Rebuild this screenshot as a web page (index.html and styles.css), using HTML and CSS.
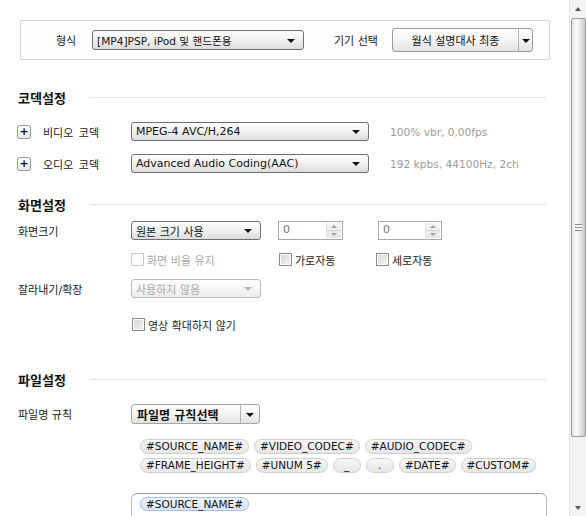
FILE: index.html
```html
<!DOCTYPE html>
<html lang="ko">
<head>
<meta charset="utf-8">
<link rel="stylesheet" href="styles.css">
</head>
<body>
<div class="page">
  <div class="content">
    <div class="formatbox">
      <span class="lbl-fmt">형식</span>
      <div class="select sel-fmt"><span class="val">[MP4]PSP, iPod 및 핸드폰용</span><i class="arrow"></i></div>
      <span class="lbl-dev">기기 선택</span>
      <div class="splitbtn dev"><span class="main">월식 설명대사 최종</span><span class="drop"><i class="arrow"></i></span></div>
    </div>

    <div class="sec-title t-codec"><span>코덱설정</span><i class="rule"></i></div>
    <div class="row codec-row r-video">
      <span class="plus">+</span>
      <span class="codec-lbl">비디오 코덱</span>
      <div class="select sel-codec"><span class="val">MPEG-4 AVC/H,264</span><i class="arrow"></i></div>
      <span class="info">100% vbr, 0,00fps</span>
    </div>
    <div class="row codec-row r-audio">
      <span class="plus">+</span>
      <span class="codec-lbl">오디오 코덱</span>
      <div class="select sel-codec"><span class="val">Advanced Audio Coding(AAC)</span><i class="arrow"></i></div>
      <span class="info">192 kpbs, 44100Hz, 2ch</span>
    </div>

    <div class="sec-title t-screen"><span>화면설정</span><i class="rule"></i></div>
    <div class="row r-size">
      <span class="lbl">화면크기</span>
      <div class="select sel-size"><span class="val">원본 크기 사용</span><i class="arrow"></i></div>
      <div class="spin sp1"><span class="num">0</span><span class="spbtn"><i class="up"></i><i class="dn"></i></span></div>
      <div class="spin sp2"><span class="num">0</span><span class="spbtn"><i class="up"></i><i class="dn"></i></span></div>
    </div>
    <div class="row r-checks">
      <label class="chk disabled c1"><i class="box"></i>화면 비율 유지</label>
      <label class="chk c2"><i class="box"></i>가로자동</label>
      <label class="chk c3"><i class="box"></i>세로자동</label>
    </div>
    <div class="row r-crop">
      <span class="lbl">잘라내기/확장</span>
      <div class="select sel-size disabled"><span class="val">사용하지 않음</span><i class="arrow"></i></div>
    </div>
    <div class="row r-zoom">
      <label class="chk c1"><i class="box"></i>영상 확대하지 않기</label>
    </div>

    <div class="sec-title t-file"><span>파일설정</span><i class="rule"></i></div>
    <div class="row r-rule">
      <span class="lbl">파일명 규칙</span>
      <div class="splitbtn rulebtn"><span class="main">파일명 규칙선택</span><span class="drop"><i class="arrow"></i></span></div>
    </div>
    <div class="tags">
      <div class="tagrow">
        <span class="tag">#SOURCE_NAME#</span>
        <span class="tag">#VIDEO_CODEC#</span>
        <span class="tag">#AUDIO_CODEC#</span>
      </div>
      <div class="tagrow">
        <span class="tag">#FRAME_HEIGHT#</span>
        <span class="tag">#UNUM 5#</span>
        <span class="tag sym">_</span>
        <span class="tag sym">.</span>
        <span class="tag">#DATE#</span>
        <span class="tag">#CUSTOM#</span>
      </div>
    </div>
    <div class="namebox">
      <span class="tag active">#SOURCE_NAME#</span>
    </div>
  </div>

  <div class="scrollbar">
    <div class="sb-btn"><i class="sb-up"></i></div>
    <div class="sb-track">
      <div class="sb-thumb"><i class="grip"></i></div>
    </div>
    <div class="sb-btn"><i class="sb-dn"></i></div>
  </div>
</div>
</body>
</html>
```

FILE: styles.css
```css
html, body {
  margin: 0;
  padding: 0;
  background: #ffffff;
}
body {
  font-family: "DejaVu Sans", "Noto Sans CJK KR", sans-serif;
  font-size: 11px;
  color: #222;
  width: 586px;
  height: 516px;
  overflow: hidden;
}
.page {
  display: flex;
  width: 586px;
  height: 516px;
}
.content {
  width: 569px;
  height: 516px;
  overflow: hidden;
  flex: none;
}

/* top format box */
.formatbox {
  margin: 20px 0 0 20px;
  width: 528px;
  height: 38px;
  border: 1px solid #d6d6d6;
  background: #fdfdfd;
  display: flex;
  align-items: center;
}
.lbl-fmt { margin-left: 35px; width: 36px; }
.lbl-dev { margin-left: 30px; width: 58px; }

.select {
  box-sizing: border-box;
  height: 19px;
  border: 1px solid #6f6f6f;
  border-radius: 3px;
  background: linear-gradient(#ffffff, #f3f3f3 45%, #dcdcdc);
  display: flex;
  align-items: center;
  padding: 0 8px 0 4px;
  color: #111;
}
.select .val { flex: 1; white-space: nowrap; overflow: hidden; }
.arrow {
  width: 0;
  height: 0;
  border-left: 4px solid transparent;
  border-right: 4px solid transparent;
  border-top: 4px solid #111;
  margin-top: 1px;
}
.sel-fmt { width: 212px; height: 20px; }
.sel-fmt .val { font-size: 10.6px; }

.splitbtn {
  box-sizing: border-box;
  display: flex;
  height: 24px;
  border: 1px solid #9c9c9c;
  border-radius: 3px;
  background: linear-gradient(#ffffff, #f4f4f4 50%, #e2e2e2);
  color: #111;
}
.splitbtn .main {
  flex: 1;
  display: flex;
  align-items: center;
  justify-content: center;
}
.splitbtn .drop {
  width: 13px;
  border-left: 1px solid #b4b4b4;
  display: flex;
  align-items: center;
  justify-content: center;
}
.dev { width: 141px; }

/* section titles */
.sec-title {
  display: flex;
  align-items: center;
  height: 14px;
  margin-left: 18px;
  width: 528px;
  font-weight: bold;
  font-size: 13px;
  color: #111;
}
.sec-title span { width: 72px; }
.sec-title .rule {
  flex: 1;
  height: 1px;
  background: #e3e3e3;
}
.t-codec { margin-top: 30px; }
.t-screen { margin-top: 24px; }
.t-file { margin-top: 41px; }

.row {
  display: flex;
  align-items: center;
}
.codec-row { height: 19px; }
.r-video { margin-top: 18px; }
.r-audio { margin-top: 13px; }
.plus {
  box-sizing: border-box;
  margin-left: 17px;
  width: 14px;
  height: 14px;
  border: 1px solid #9a9a9a;
  border-radius: 2px;
  background: linear-gradient(#ffffff, #e8e8e8);
  font-weight: bold;
  font-size: 11px;
  line-height: 11px;
  text-align: center;
  color: #111;
}
.codec-lbl { margin-left: 12px; width: 88px; word-spacing: 2px; }
.sel-codec { width: 238px; }
.info { margin-left: 21px; color: #9c9c9c; font-size: 10.6px; }

.lbl { margin-left: 18px; width: 113px; }
.r-size { margin-top: 10px; height: 19px; }
.sel-size { width: 130px; }
.select.disabled {
  border-color: #b8b8b8;
  color: #a8a8a8;
  background: linear-gradient(#ffffff, #f6f6f6 45%, #ececec);
}
.select.disabled .arrow { border-top-color: #b8b8b8; }

.spin {
  box-sizing: border-box;
  height: 19px;
  border: 1px solid #a9a9a9;
  background: #fff;
  display: flex;
  align-items: stretch;
  color: #777;
}
.spin .num { flex: 1; padding-left: 4px; line-height: 16px; }
.spbtn {
  width: 14px;
  margin: 1px 1px 1px 0;
  display: flex;
  flex-direction: column;
  background: linear-gradient(#f6f6f6, #e6e6e6);
  border-left: 1px solid #e0e0e0;
}
.spbtn i {
  flex: 1;
  display: flex;
  align-items: center;
  justify-content: center;
}
.spbtn .up { border-bottom: 1px solid #d4d4d4; }
.spbtn .up::before {
  content: "";
  border-left: 3px solid transparent;
  border-right: 3px solid transparent;
  border-bottom: 3px solid #a0a0a0;
}
.spbtn .dn::before {
  content: "";
  border-left: 3px solid transparent;
  border-right: 3px solid transparent;
  border-top: 3px solid #a0a0a0;
}
.sp1 { margin-left: 17px; width: 65px; }
.sp2 { margin-left: 35px; width: 64px; }

.chk {
  display: flex;
  align-items: center;
  height: 13px;
  color: #222;
}
.chk .box {
  box-sizing: border-box;
  width: 13px;
  height: 13px;
  border: 1px solid #8a8a8a;
  background: #fff;
  margin-right: 3px;
  position: relative;
}
.chk .box::after {
  content: "";
  position: absolute;
  left: 1px; top: 1px; right: 1px; bottom: 1px;
  background: linear-gradient(135deg, #d8d8d8, #f2f2f2);
}
.chk.disabled { color: #a8a8a8; }
.chk.disabled .box { border-color: #c8c8c8; }
.chk.disabled .box::after { background: #fff; }
.r-checks { margin-top: 13px; height: 13px; }
.c1 { margin-left: 131px; width: 148px; }
.c2 { width: 97px; }
.r-crop { margin-top: 13px; height: 19px; }
.r-zoom { margin-top: 20px; height: 13px; }
.r-zoom .c1 { margin-left: 132px; }

.r-rule { margin-top: 18px; height: 20px; }
.rulebtn {
  width: 129px;
  height: 20px;
  font-weight: bold;
  font-size: 12px;
  border-color: #a4a4a4;
}
.rulebtn .main { justify-content: flex-start; padding-left: 5px; }
.rulebtn .drop { width: 18px; }

.tags {
  margin: 15px 0 0 140px;
  display: flex;
  flex-direction: column;
  gap: 4px;
}
.tagrow { display: flex; gap: 5px; }
.tag {
  box-sizing: border-box;
  height: 15px;
  padding: 0 5px;
  border: 1px solid #cfcfcf;
  border-radius: 8px;
  background: linear-gradient(#f8f8f8, #e6e6e6);
  font-size: 10.5px;
  line-height: 13px;
  color: #111;
  white-space: nowrap;
}
.tag.sym { width: 28px; text-align: center; }
.tag.active {
  background: linear-gradient(#eef4ff, #d8e6fb);
  border-color: #a9c0e6;
}
.namebox {
  box-sizing: border-box;
  margin: 20px 0 0 131px;
  width: 416px;
  height: 40px;
  border: 1px solid #b9b9b9;
  border-top-color: #999;
  border-radius: 6px;
  padding: 4px 0 0 8px;
}

/* scrollbar */
.scrollbar {
  width: 17px;
  height: 516px;
  flex: none;
  display: flex;
  flex-direction: column;
  background: #f3f3f3;
  border-left: 1px solid #e6e6e6;
  box-sizing: border-box;
}
.sb-btn {
  height: 17px;
  display: flex;
  align-items: center;
  justify-content: center;
}
.sb-up {
  border-left: 3px solid transparent;
  border-right: 3px solid transparent;
  border-bottom: 4px solid #555;
}
.sb-dn {
  border-left: 3px solid transparent;
  border-right: 3px solid transparent;
  border-top: 4px solid #555;
}
.sb-track { flex: 1; padding-top: 1px; }
.sb-thumb {
  box-sizing: border-box;
  margin-left: 1px;
  width: 15px;
  height: 419px;
  border: 1px solid #9a9a9a;
  border-radius: 2px;
  background: linear-gradient(to right, #e4e4e4, #fafafa 35%, #e8e8e8 65%, #c8c8c8);
  display: flex;
  align-items: center;
  justify-content: center;
}
.grip {
  width: 7px;
  height: 5px;
  border-top: 1px solid #8a8a8a;
  border-bottom: 1px solid #8a8a8a;
  background: linear-gradient(#fff 40%, #8a8a8a 40%, #8a8a8a 60%, #fff 60%);
}
```
